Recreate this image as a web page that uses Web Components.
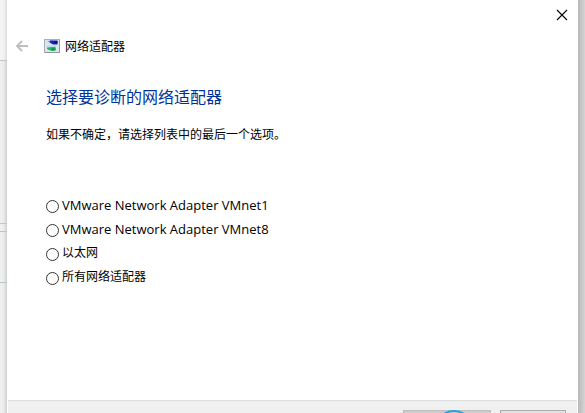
<!DOCTYPE html>
<html lang="zh-CN">
<head>
<meta charset="UTF-8">
<meta name="viewport" content="width=device-width, initial-scale=1">
<title>网络适配器</title>
<style>
  body {
    margin: 0;
    background: #d4d4d4;
    color: #000;
    font: 12px/24px "Noto Sans", "Noto Sans CJK SC", sans-serif;
  }
</style>
</head>
<body>
<trouble-shooter>
  <title-bar slot="title" label="网络适配器"></title-bar>
  <adapter-list heading="选择要诊断的网络适配器" hint="如果不确定，请选择列表中的最后一个选项。">
    <adapter-option lang="en" name="VMware Network Adapter VMnet1"></adapter-option>
    <adapter-option lang="en" name="VMware Network Adapter VMnet8"></adapter-option>
    <adapter-option name="以太网"></adapter-option>
    <adapter-option name="所有网络适配器"></adapter-option>
  </adapter-list>
  <button-bar slot="footer"></button-bar>
</trouble-shooter>

<script>
class TroubleShooter extends HTMLElement {
  constructor() {
    super()
    this.attachShadow({ mode: "open" })
  }
  getTemplate() {
    const template = document.createElement("template");
    template.innerHTML = `
      <div class="behind left">
        <i class="top"></i><i class="middle"></i><i class="band"></i><i class="bottom"></i>
      </div>
      <section class="dialog">
        <slot name="title"></slot>
        <main><slot></slot></main>
        <slot name="footer"></slot>
      </section>
      <div class="behind right"></div>
      ${this.getStyles()}
    `;
    return template;
  }
  getStyles() {
    return `
      <style>
          :host {
            display: grid;
            grid-template-columns: 7px 1fr 7px;
            height: 100vh;
            overflow: hidden;
          }
          .dialog {
            display: flex;
            flex-direction: column;
            background: #fff;
          }
          main {
            flex: 1;
          }
          .left {
            display: flex;
            flex-direction: column;
            background: linear-gradient(to right, #f1f1f1, #ebebeb 55%, #cecece);
          }
          .left i {
            box-sizing: border-box;
            border-bottom: 1px solid #c6c6c6;
          }
          .top {
            height: 61px;
            background: rgba(255, 255, 255, 0.3);
          }
          .middle {
            height: 163px;
          }
          .left .band {
            height: 8px;
            border-color: #b5c6cc;
          }
          .left .bottom {
            height: 51px;
            border-color: #b5c6cc;
          }
          .right {
            background: linear-gradient(to right, #b8b8b8, #d5d5d5);
          }
      </style>
    `;
  }
  connectedCallback() {
    this.shadowRoot.appendChild(this.getTemplate().content.cloneNode(true));
  }
}

class TitleBar extends HTMLElement {
  constructor() {
    super()
    this.attachShadow({ mode: "open" })
  }
  getTemplate() {
    const template = document.createElement("template");
    template.innerHTML = `
      <div class="caption">
        <button class="close" aria-label="关闭">
          <svg width="12" height="12" viewBox="0 0 12 12"><path d="M1 1l10 10M11 1L1 11" stroke="#000" stroke-width="1.1"/></svg>
        </button>
      </div>
      <header>
        <button aria-label="后退" disabled>
          <svg width="14" height="12" viewBox="0 0 14 12" fill="none"><path d="M13 6H2M7 1L2 6l5 5" stroke="#bdbdbd" stroke-width="1.8"/></svg>
        </button>
        <svg class="icon" width="16" height="14" viewBox="0 0 16 14">
          <rect x=".5" y=".5" width="15" height="13" fill="#dde5ec" stroke="#a9afb4"/>
          <path d="M1 13.500h14.500V1" fill="none" stroke="#8f969c"/>
          <path d="M3.500 2l5-.5L9 5 6 4z" fill="#6f8be0"/>
          <path d="M6 1.500h7.500v4H9L6 3.500z" fill="#1826b4"/>
          <path d="M10 2h3.500v2.500H10z" fill="#0a1486"/>
          <path d="M2 6.500l5-.5 2 2-5 1z" fill="#c3dcf3"/>
          <path d="M3 8.500l5-.5 3.500-.5V11L9 12l-3-.5L3 10z" fill="#25b866"/>
          <path d="M7 9.500l4.500-.5v2.500H8z" fill="#109a48"/>
        </svg>
        <span>${this.getAttribute("label")}</span>
      </header>
      ${this.getStyles()}
    `;
    return template;
  }
  getStyles() {
    return `
      <style>
          :host {
            display: block;
          }
          .caption {
            display: flex;
            justify-content: flex-end;
            height: 30px;
          }
          button {
            display: flex;
            align-items: center;
            justify-content: center;
            width: 30px;
            height: 30px;
            padding: 0;
            border: 0;
            background: none;
          }
          .close {
            width: 32px;
          }
          header {
            display: flex;
            align-items: center;
            height: 32px;
          }
          .icon {
            margin: 0 5px 0 7px;
          }
          span {
            padding-top: 2px;
          }
      </style>
    `;
  }
  connectedCallback() {
    this.shadowRoot.appendChild(this.getTemplate().content.cloneNode(true));
  }
}

class AdapterList extends HTMLElement {
  constructor() {
    super()
    this.attachShadow({ mode: "open" })
  }
  getTemplate() {
    const template = document.createElement("template");
    template.innerHTML = `
      <h1>${this.getAttribute("heading")}</h1>
      <p>${this.getAttribute("hint")}</p>
      <div class="options" role="radiogroup" aria-label="${this.getAttribute("heading")}"><slot></slot></div>
      ${this.getStyles()}
    `;
    return template;
  }
  getStyles() {
    return `
      <style>
          :host {
            display: block;
            padding: 23px 39px;
          }
          h1 {
            margin: 0 0 14px;
            color: #003399;
            font-size: 16px;
            font-weight: 400;
            line-height: 24px;
          }
          p {
            margin: 0 0 46px;
          }
          .options {
            display: grid;
          }
      </style>
    `;
  }
  connectedCallback() {
    this.shadowRoot.appendChild(this.getTemplate().content.cloneNode(true));
    // radios in separate shadow roots do not form a group by themselves
    this.addEventListener("pick", (e) => {
      this.querySelectorAll("adapter-option").forEach((option) => {
        option.checked = option === e.target;
      });
    });
  }
}

class AdapterOption extends HTMLElement {
  constructor() {
    super()
    this.attachShadow({ mode: "open" })
  }
  set checked(val) {
    this.shadowRoot.querySelector("input").checked = val;
  }
  getTemplate() {
    const template = document.createElement("template");
    template.innerHTML = `
      <input type="radio" id="radio">
      <label for="radio">${this.getAttribute("name")}</label>
      ${this.getStyles()}
    `;
    return template;
  }
  getStyles() {
    return `
      <style>
          :host {
            display: flex;
            align-items: flex-start;
            gap: 3px;
            height: 24px;
          }
          :host([lang="en"]) {
            font-family: "Open Sans", sans-serif;
            font-size: 13px;
          }
          input {
            appearance: none;
            box-sizing: border-box;
            width: 13px;
            height: 13px;
            margin: 7px 0 0;
            border: 1px solid #333;
            border-radius: 50%;
            background: #fff;
          }
          input:checked {
            background: radial-gradient(#333 3px, #fff 4px);
          }
      </style>
    `;
  }
  connectedCallback() {
    this.shadowRoot.appendChild(this.getTemplate().content.cloneNode(true));
    this.shadowRoot.querySelector("input").addEventListener("change", () => {
      this.dispatchEvent(new CustomEvent("pick", { bubbles: true }));
    });
  }
}

class ButtonBar extends HTMLElement {
  constructor() {
    super()
    this.attachShadow({ mode: "open" })
  }
  getTemplate() {
    const template = document.createElement("template");
    template.innerHTML = `
      <button class="next" aria-label="下一步" disabled>
        <svg width="40" height="40" viewBox="0 0 40 40"><circle cx="20" cy="20" r="19" fill="none" stroke="#1ba4e8" stroke-width="2"/></svg>
      </button>
      <button aria-label="取消"></button>
      ${this.getStyles()}
    `;
    return template;
  }
  getStyles() {
    return `
      <style>
          /* only the upper edge of the buttons shows */
          :host {
            display: flex;
            justify-content: flex-end;
            align-items: flex-start;
            gap: 9px;
            box-sizing: border-box;
            height: 13px;
            overflow: hidden;
            margin: 0 1px;
            padding: 9px 11px 0;
            border-top: 1px solid #dfdfdf;
            background: #f0f0f0;
          }
          button {
            box-sizing: border-box;
            width: 66px;
            height: 32px;
            padding: 0;
            border: 1px solid #adadad;
            background: #e1e1e1;
          }
          .next {
            display: flex;
            justify-content: center;
            align-items: flex-start;
            width: 88px;
            border-color: #bfbfbf;
            background: #cccccc;
          }
          svg {
            flex: none;
            margin: -1px 0 0 14px;
          }
      </style>
    `;
  }
  connectedCallback() {
    this.shadowRoot.appendChild(this.getTemplate().content.cloneNode(true));
  }
}

customElements.define("trouble-shooter", TroubleShooter);
customElements.define("title-bar", TitleBar);
customElements.define("adapter-list", AdapterList);
customElements.define("adapter-option", AdapterOption);
customElements.define("button-bar", ButtonBar);
</script>
</body>
</html>
